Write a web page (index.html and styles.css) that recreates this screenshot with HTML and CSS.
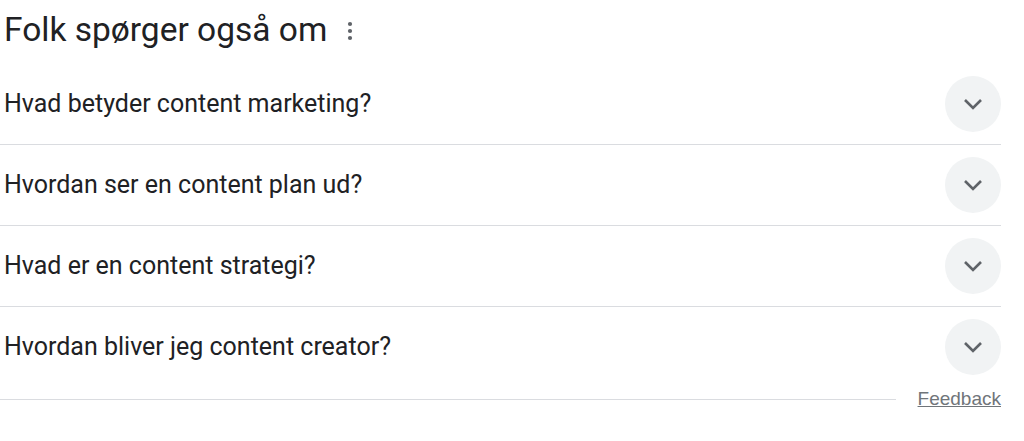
FILE: index.html
```html
<!DOCTYPE html>
<html lang="da">
<head>
<meta charset="utf-8">
<title>Folk spørger også om</title>
<link rel="stylesheet" href="styles.css">
</head>
<body>
<div class="paa">
  <div class="paa-head">
    <h2 class="paa-title">Folk spørger også om</h2>
    <span class="paa-menu" aria-label="Flere valgmuligheder">
      <svg width="6" height="20" viewBox="0 0 6 20"><circle cx="3" cy="3" r="2.1" fill="#5f6368"/><circle cx="3" cy="10" r="2.1" fill="#5f6368"/><circle cx="3" cy="17" r="2.1" fill="#5f6368"/></svg>
    </span>
  </div>
  <div class="paa-list">
    <div class="paa-row">
      <span class="paa-q">Hvad betyder content marketing?</span>
      <span class="paa-btn"><svg width="20" height="12" viewBox="0 0 20 12"><path d="M2 2 L10 10 L18 2" fill="none" stroke="#5f6368" stroke-width="2.6"/></svg></span>
    </div>
    <div class="paa-row">
      <span class="paa-q">Hvordan ser en content plan ud?</span>
      <span class="paa-btn"><svg width="20" height="12" viewBox="0 0 20 12"><path d="M2 2 L10 10 L18 2" fill="none" stroke="#5f6368" stroke-width="2.6"/></svg></span>
    </div>
    <div class="paa-row">
      <span class="paa-q">Hvad er en content strategi?</span>
      <span class="paa-btn"><svg width="20" height="12" viewBox="0 0 20 12"><path d="M2 2 L10 10 L18 2" fill="none" stroke="#5f6368" stroke-width="2.6"/></svg></span>
    </div>
    <div class="paa-row paa-row-last">
      <span class="paa-q">Hvordan bliver jeg content creator?</span>
      <span class="paa-btn"><svg width="20" height="12" viewBox="0 0 20 12"><path d="M2 2 L10 10 L18 2" fill="none" stroke="#5f6368" stroke-width="2.6"/></svg></span>
    </div>
  </div>
  <div class="paa-foot">
    <span class="paa-rule"></span>
    <a class="paa-feedback" href="#">Feedback</a>
  </div>
</div>
</body>
</html>
```

FILE: styles.css
```css
html, body {
  margin: 0;
  padding: 0;
  background: #fff;
}
body {
  font-family: Roboto, "Liberation Sans", Arial, sans-serif;
  color: #202124;
}
.paa {
  width: 1001px;
  padding-left: 4px;
  box-sizing: border-box;
}
.paa-head {
  height: 64px;
  display: flex;
  align-items: center;
  gap: 20px;
  padding-bottom: 4px;
  box-sizing: border-box;
}
.paa-title {
  margin: 0;
  font-weight: 400;
  font-size: 33.5px;
  line-height: 40px;
}
.paa-menu {
  display: flex;
  align-items: center;
  padding-top: 2px;
}
.paa-row {
  height: 81px;
  display: flex;
  align-items: center;
  justify-content: space-between;
  border-bottom: 1px solid #dadce0;
  box-sizing: border-box;
  margin-left: -4px;
  padding-left: 4px;
}
.paa-row-last {
  border-bottom: none;
  height: 80px;
}
.paa-q {
  font-size: 25px;
  line-height: 30px;
}
.paa-btn {
  width: 56px;
  height: 56px;
  border-radius: 50%;
  background: #f1f3f4;
  display: flex;
  align-items: center;
  justify-content: center;
}
.paa-foot {
  display: flex;
  align-items: center;
  margin-left: -4px;
  height: 24px;
}
.paa-rule {
  flex: 1;
  height: 1px;
  background: #dadce0;
  margin-right: 22px;
}
.paa-feedback {
  font-family: "Liberation Sans", Arial, sans-serif;
  font-size: 19px;
  color: #70757a;
  text-decoration: underline;
}
```
